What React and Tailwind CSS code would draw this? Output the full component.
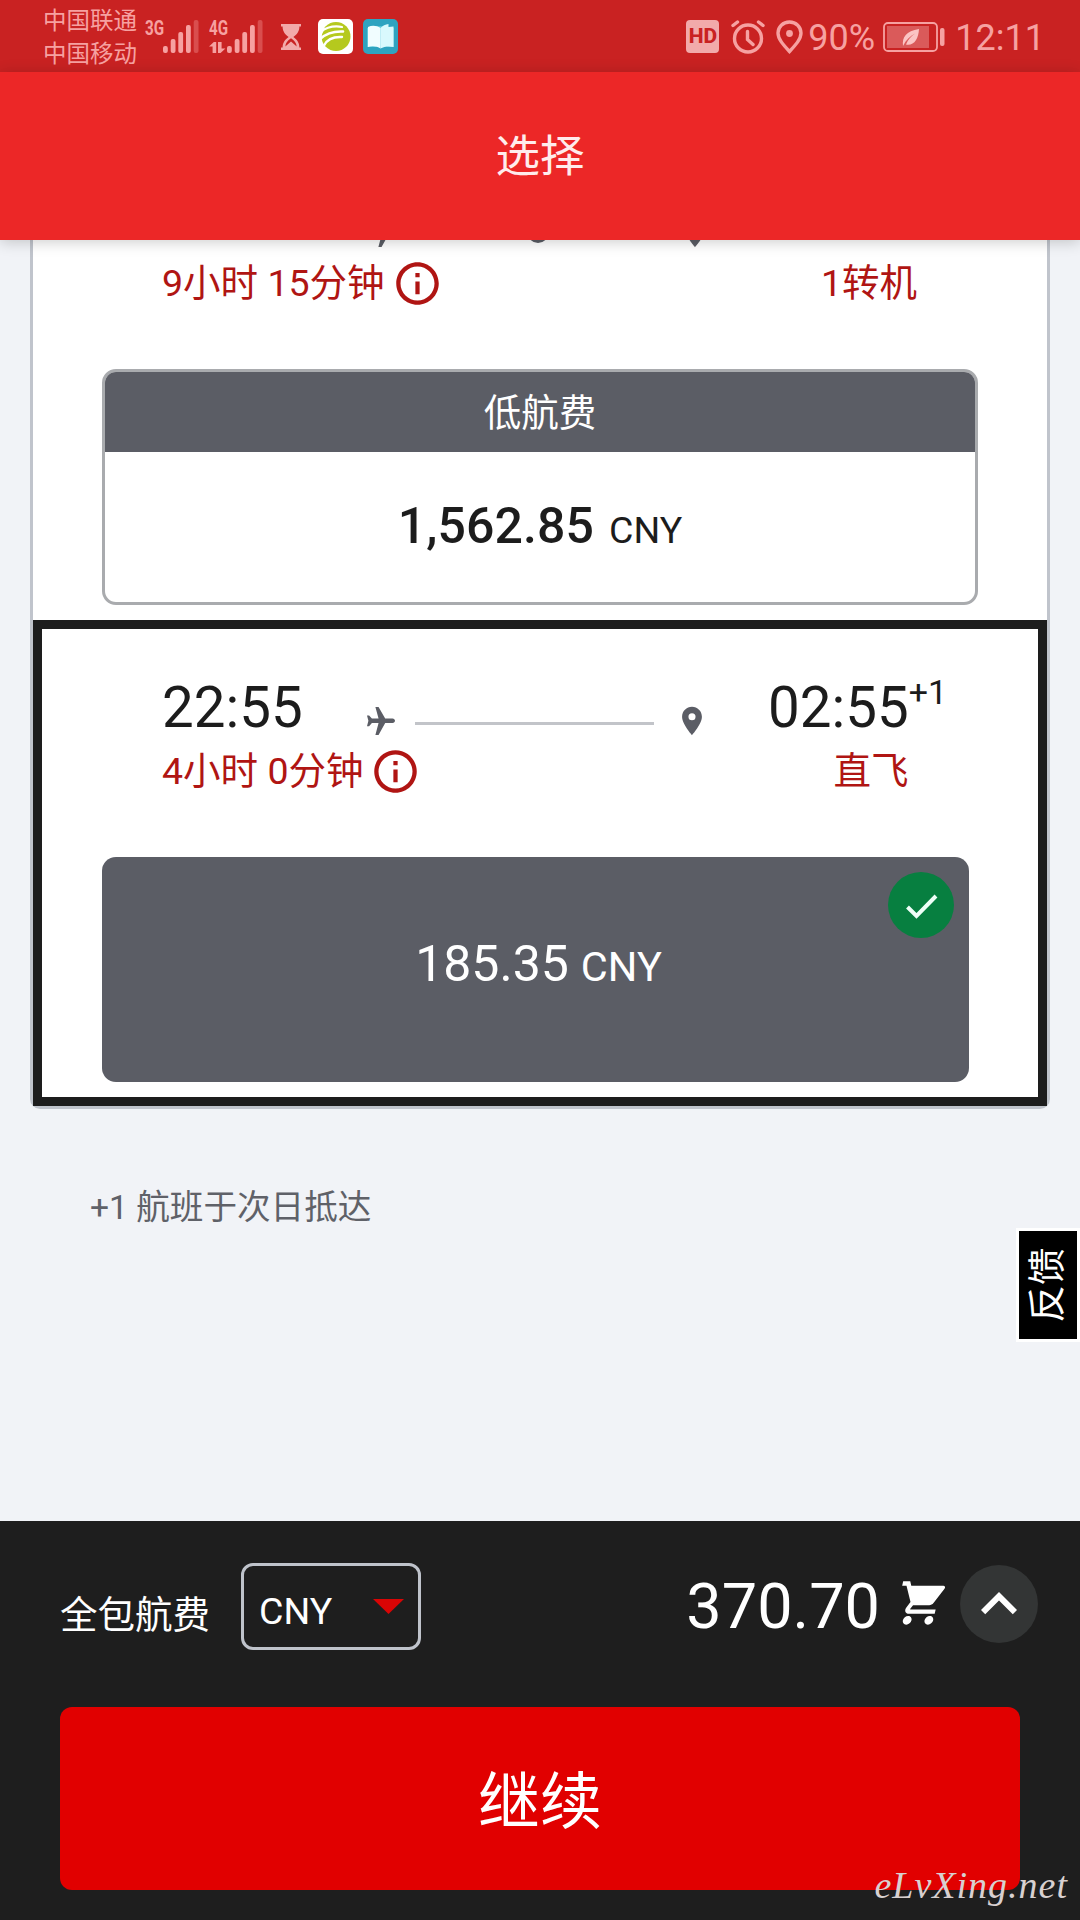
import { MdKeyboardArrowUp, MdOutlineInfo, MdPlace, MdShoppingCart } from 'react-icons/md'

const SIGNAL_BARS = [
  { x: 0, h: 7 },
  { x: 7.7, h: 14 },
  { x: 15.3, h: 21 },
  { x: 23, h: 28 },
]

function SignalBars({ type, data }) {
  return (
    <div className="relative w-[54px] h-[34px] shrink-0">
      <span className="absolute left-0 -top-[4px] text-[20px] leading-[24px] font-bold origin-left scale-x-[0.76]">{type}</span>
      <svg width="54" height="34" viewBox="0 0 54 34" className="fill-[#f6a1a1]">
        {data && (
          <>
            <path d="M0 26.5l4.8-4.5h2.4v11H3.6v-6.5z" />
            <path d="M9 22h3.6v6.5h3.8L11.6 33H9z" />
          </>
        )}
        {SIGNAL_BARS.map(b => (
          <rect key={b.x} x={18 + b.x} y={33 - b.h} width="4.8" height={b.h} rx="2" />
        ))}
        <rect x="48.7" y="0" width="4.8" height="33" rx="2" opacity="0.35" />
      </svg>
    </div>
  )
}

function StatusBar() {
  return (
    <div className="h-[72px] bg-[#c92222] text-[#f6a1a1] flex items-center pl-[43px] pr-[35px] pt-[1px]">
      <div className="w-[102px] text-[23.5px] leading-[33px] pt-[3px] whitespace-nowrap">
        <p>中国联通</p>
        <p>中国移动</p>
      </div>
      <SignalBars type="3G" />
      <div className="w-[10px]" />
      <SignalBars type="4G" data />

      {/* Hourglass */}
      <svg width="20" height="26" viewBox="0 0 20 26" className="ml-[18px] fill-[#f2aaaa]">
        <path d="M0 0h20v2.5h-1.6c0 5-2.6 8-6 10.5 3.400 2.500 6 5.500 6 10.500H20V26H0v-2.500h1.600c0-5 2.600-8 6-10.500-3.400-2.500-6-5.500-6-10.500H0z" />
        <path className="fill-[#c92222]" d="M4.300 22.500c.3-3.300 2.200-6 5.700-8.200 3.500 2.200 5.400 4.900 5.700 8.200L10 17.500z" />
      </svg>

      {/* App notifications */}
      <svg width="35" height="35" viewBox="0 0 35 35" className="ml-[17px]">
        <rect width="35" height="35" rx="5" fill="#fff" />
        <circle cx="18" cy="17.5" r="14.5" fill="#b5c91e" />
        <g fill="none" stroke="#fff" strokeLinecap="round">
          <path d="M2 13C9 8 16 6.5 24 8" strokeWidth="2.2" />
          <path d="M2 20C8 14.5 15 12 25 12.5" strokeWidth="2.6" />
          <path d="M6 26.5c3-6 9-9 18-8.5" strokeWidth="2.4" />
        </g>
        <path d="M1 8v20l5 3c-4-6-4-15 1-21z" fill="#fff" />
      </svg>
      <svg width="35" height="35" viewBox="0 0 35 35" className="ml-[10px]">
        <rect width="35" height="35" rx="5" fill="#2fa3c0" />
        <path d="M4 9l13-2 14 2v19H4z" fill="#5cc5d8" />
        <path d="M5 8c4-2 9-1.5 12.5 1v20.5C14 27 9 26.5 5 28z" fill="#f1fdff" />
        <path d="M17.5 9c2-2.5 5-3.5 8-4v3l5-.5V28c-4-1-9-1-13 1.500z" fill="#d9f9fd" />
      </svg>

      <div className="ml-auto flex items-center">
        <span className="size-[33px] rounded-[4px] bg-[#f2aaaa] text-[#c92222] text-[21px] leading-[33px] font-extrabold text-center">HD</span>
        <svg width="34" height="34" viewBox="0 0 34 34" className="ml-[12px]" fill="none" stroke="#f6a1a1" strokeWidth="3.4" strokeLinecap="round">
          <circle cx="17" cy="18.5" r="13.5" />
          <path d="M16.500 11.500v8l5.500 5M2 5.500L6.500 2M32 5.500L27.500 2" />
        </svg>
        <svg width="27" height="34" viewBox="0 0 27 34" className="ml-[11px]">
          <path d="M13.500 2C7 2 2 6.800 2 13c0 6 5 11.500 11.500 18.500C20 24.500 25 19 25 13c0-6.200-5-11-11.500-11z" fill="none" stroke="#f6a1a1" strokeWidth="3.4" />
          <circle cx="13.5" cy="13.5" r="3.4" fill="#f6a1a1" />
        </svg>
        <span className="ml-[5px] pt-[2px] w-[75px] text-[36px] leading-[50px]">90%</span>
        <svg width="62" height="30" viewBox="0 0 62 30">
          <rect x="1" y="1" width="53" height="28" rx="4" fill="none" stroke="#f6a1a1" strokeWidth="1.8" />
          <rect x="4" y="4" width="42" height="22" fill="#da5a5a" />
          <path d="M20 24c-1-9 3-15 16-17-.5 10-5 17-13 15.500 2-5 5-8 9-11-5 2.500-9 6.500-12 12.500z" fill="#fbc4c4" />
          <rect x="57" y="6" width="4.5" height="18" rx="2" fill="#f6a1a1" />
        </svg>
        <span className="ml-[10px] pt-[2px] text-[36px] leading-[50px]">12:11</span>
      </div>
    </div>
  )
}

function PlaneIcon() {
  return (
    <svg width="28" height="28" viewBox="0 0 80 80" className="shrink-0 fill-[#5b5d65]">
      <path d="M24 0h9l19 33h21c4 0 7 3 7 6.500S77 46 73 46H52L33 80h-9l9-34H14L6 55H0l4-15.500L0 24h6l8 9h19z" />
    </svg>
  )
}

function FlightTimes({ departure, arrival, nextDay, stops }) {
  return (
    <div className="h-[72px] flex items-center leading-[72px] text-[56.5px] text-[#1c1c1c]">
      <span className={stops ? 'w-[208px]' : 'w-[205px]'}>{departure}</span>
      <div className="flex items-center pt-[25px]">
        <PlaneIcon />
        <div className="relative mt-[6px] ml-[20px] mr-[21px] w-[239px] h-[3px] bg-[#c2c4c9]">
          {stops > 0 && (
            <span className="absolute left-1/2 -translate-x-1/2 -top-[12px] size-[21px] rounded-full bg-[#5b5d65]" />
          )}
        </div>
        <MdPlace className="size-[34px] text-[#5b5d65]" />
      </div>
      <span className="ml-[59px]">{arrival}</span>
      {nextDay && <span className="text-[34px] leading-[34px] -mt-[32px]">{nextDay}</span>}
    </div>
  )
}

function FlightDetails({ duration, label }) {
  return (
    <div className="mt-[2px] h-[50px] flex items-center text-[37.5px] leading-[50px] text-[#b01513]">
      <span>{duration}</span>
      <MdOutlineInfo className="ml-[7px] size-[51px]" />
      <span className="ml-auto w-[200px] text-center">{label}</span>
    </div>
  )
}

function FlightList() {
  return (
    <div className="mx-[30px] -mt-[102px] rounded-[10px] border-3 border-[#c0c4cc] bg-white">
      <div className="pt-[43px] pb-[15px]">
        <div className="pl-[129px] pr-[78px]">
          <FlightTimes stops={1} />
          <FlightDetails duration="9小时 15分钟" label="1转机" />
        </div>
        <div className="mt-[61px] ml-[69px] w-[876px] h-[236px] rounded-[14px] border-3 border-[#a9abae] overflow-hidden">
          <div className="h-[80px] bg-[#5b5d65] text-white text-[37.5px] leading-[83px] text-center">低航费</div>
          <div className="h-[150px] flex items-baseline justify-center gap-[15px] leading-[149px] text-[#1c1c1c]">
            <span className="text-[50px] font-medium tracking-[0.1px]">1,562.85</span>
            <span className="text-[37.5px]">CNY</span>
          </div>
        </div>
      </div>

      {/* Selected flight */}
      <div className="border-9 border-[#1d1d1d] pt-[43px] pb-[15px]">
        <div className="pl-[120px] pr-[67px]">
          <FlightTimes departure="22:55" arrival="02:55" nextDay="+1" />
          <FlightDetails duration="4小时 0分钟" label="直飞" />
        </div>
        <div className="relative mt-[61px] ml-[60px] w-[867px] h-[225px] rounded-[14px] bg-[#5b5d65] text-white flex items-baseline justify-center gap-[12px] pl-[6px] leading-[214px]">
          <span className="text-[50px]">185.35</span>
          <span className="text-[41.5px]">CNY</span>
          <span className="absolute top-[15px] right-[15px] size-[66px] rounded-full bg-[#077f40]">
            <svg width="66" height="66" viewBox="0 0 66 66" fill="none" stroke="#effff8" strokeWidth="4">
              <path d="M19.500 35l9 9L48 24" />
            </svg>
          </span>
        </div>
      </div>
    </div>
  )
}

function Footer() {
  return (
    <div className="h-[399px] bg-[#1e1e1e] px-[60px] pt-[42px] text-white">
      <div className="h-[87px] flex items-center -mr-[18px]">
        <span className="w-[181px] text-[37.5px] leading-[50px] pt-[17px]">全包航费</span>
        <div className="w-[180px] h-[87px] rounded-[12px] border-3 border-[#bfc3cb] flex items-center justify-between pl-[15px] pr-[14px]">
          <span className="text-[37.5px] leading-[50px] pt-[9px]">CNY</span>
          <svg width="31" height="15" viewBox="0 0 31 15" className="fill-[#d90505]">
            <path d="M0 0h31L15.500 15z" />
          </svg>
        </div>
        <span className="ml-auto text-[63px] leading-[87px]">370.70</span>
        <MdShoppingCart className="ml-[16px] mr-[2px] size-[52px] -skew-x-[13deg] -mt-[8px]" />
        <button className="ml-[10px] -mt-[5px] size-[78px] rounded-full bg-[#333535] flex items-center justify-center">
          <MdKeyboardArrowUp className="size-[72px]" />
        </button>
      </div>
      <button className="mt-[57px] w-full h-[183px] rounded-[12px] bg-[#e10000] text-[62px] leading-[183px] pt-[4px]">
        <span className="block h-[179px]">继续</span>
      </button>
    </div>
  )
}

export default function App() {
  return (
    <div className="relative w-[1080px] h-[1920px] overflow-hidden flex flex-col bg-[#f1f3f7] font-['Roboto','Noto_Sans_CJK_SC',sans-serif]">
      <StatusBar />
      <header className="relative z-10 h-[168px] bg-[#ec2727] text-[#ffecec] text-[44.5px] leading-[171px] text-center shadow-[0_2px_14px_rgba(0,0,0,0.2)]">
        选择
      </header>

      <main className="flex-1 overflow-hidden">
        <FlightList />
        <p className="mt-[79px] ml-[90px] text-[33.6px] leading-[40px] text-[#5f6168]">+1 航班于次日抵达</p>
      </main>

      <Footer />

      {/* Feedback tab */}
      <button className="absolute left-[1016px] top-[1228px] w-[64px] h-[114px] border-3 border-white bg-black text-white flex items-center justify-center">
        <span className="-ml-[3px] -rotate-90 whitespace-nowrap text-[37.5px] leading-[50px]">反馈</span>
      </button>

      <span className="absolute right-[12px] bottom-[13px] font-['Liberation_Serif',serif] italic text-[38px] leading-[44px] tracking-[1px] text-[#d8d0d0]">
        eLvXing.net
      </span>
    </div>
  )
}
